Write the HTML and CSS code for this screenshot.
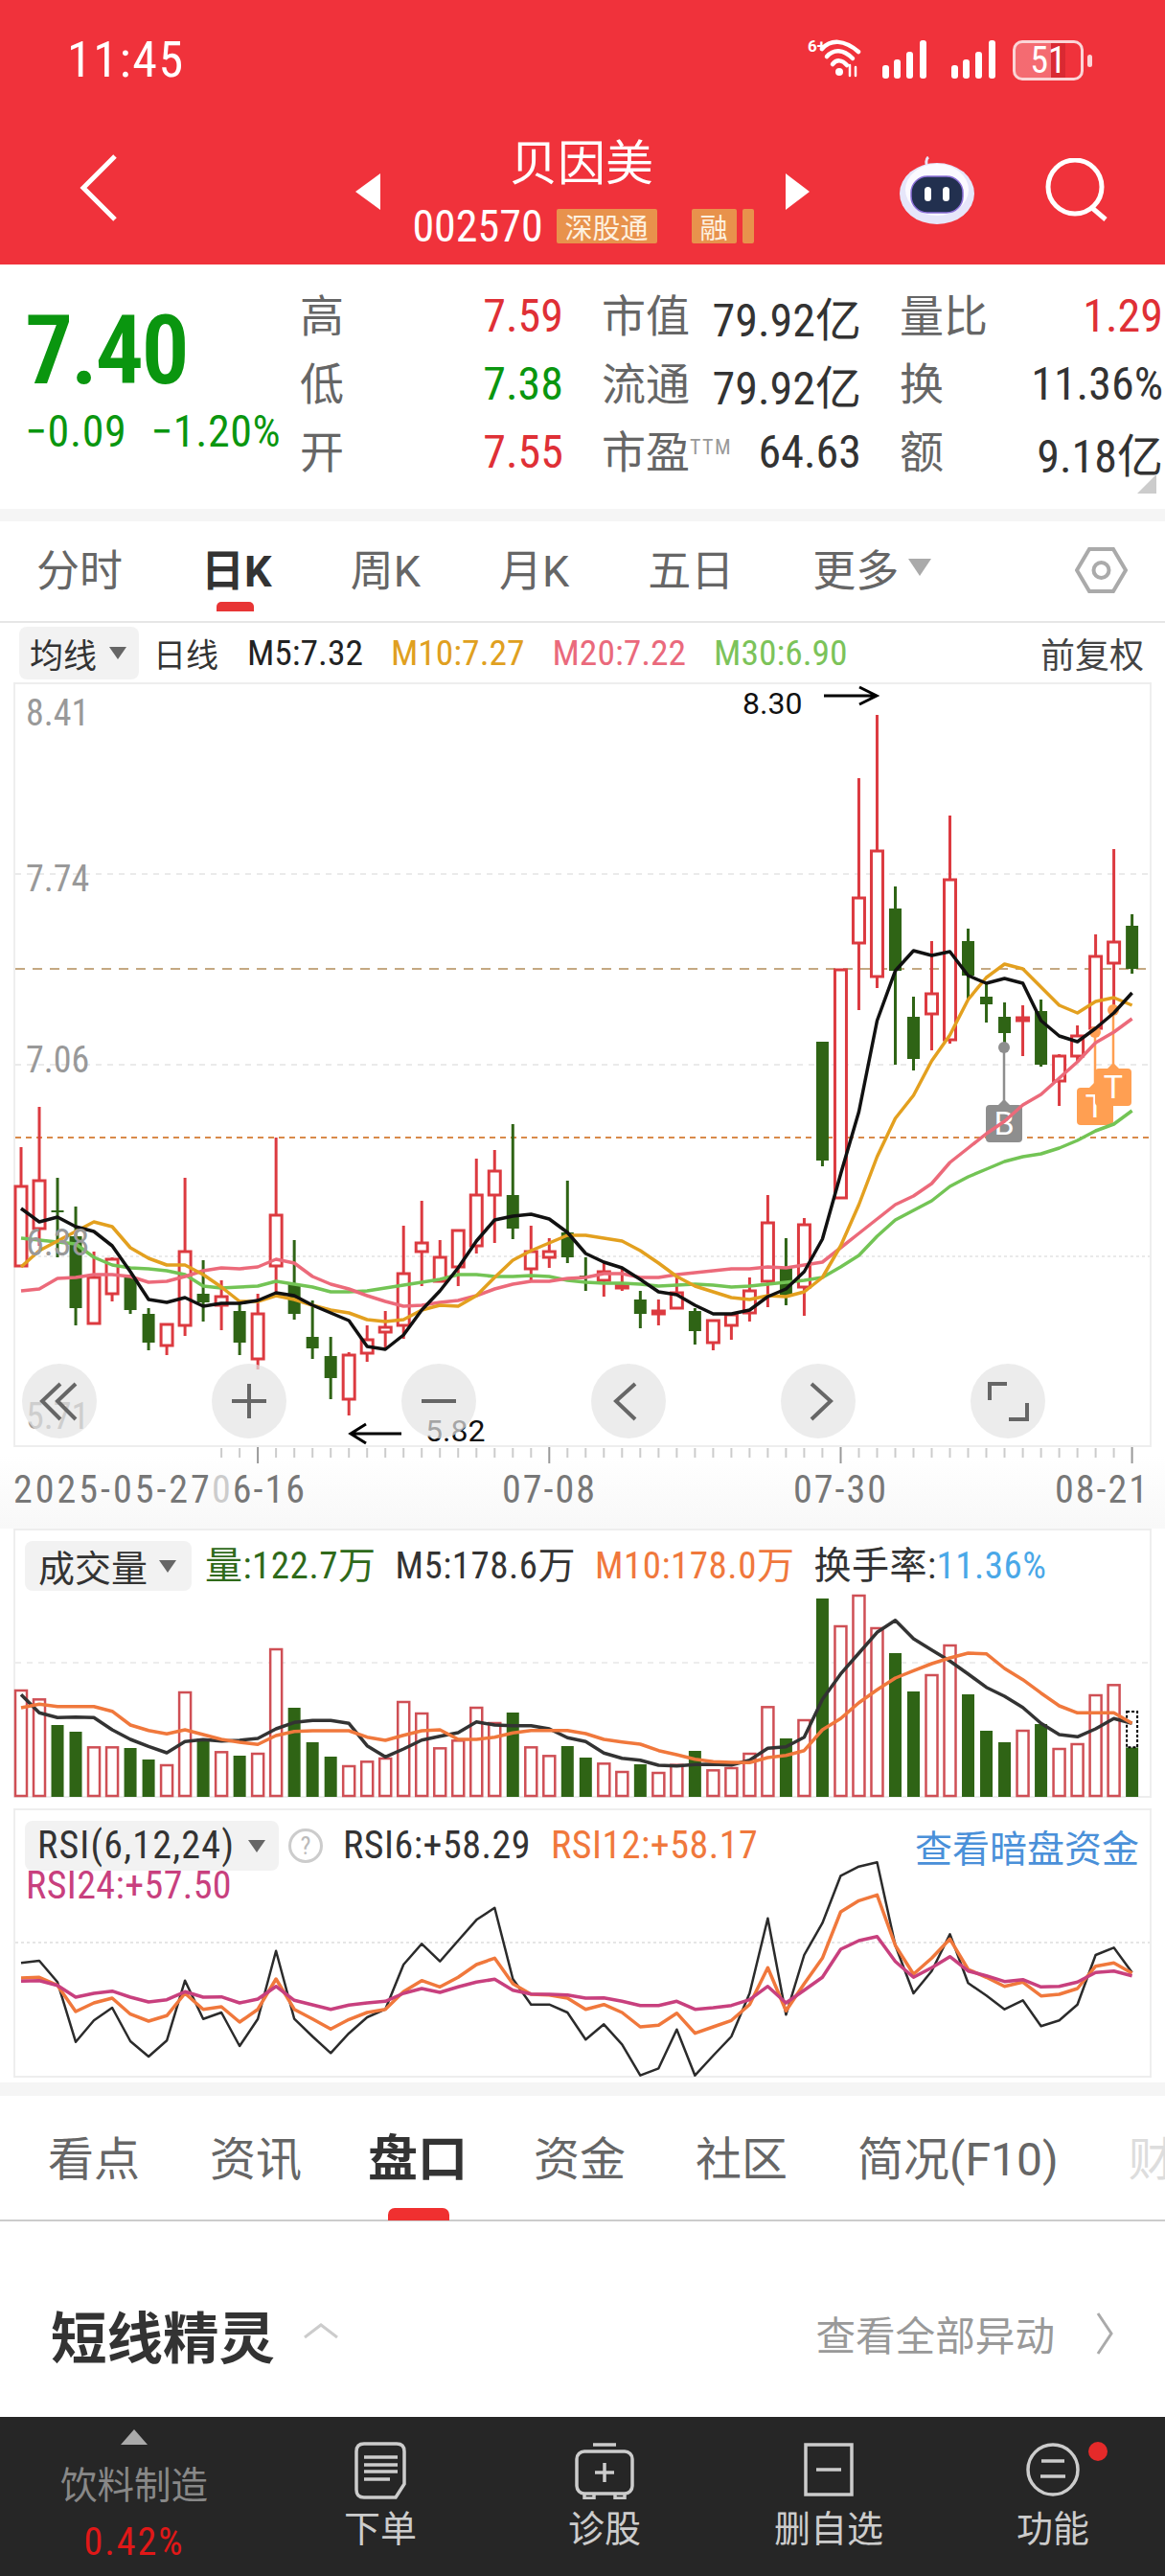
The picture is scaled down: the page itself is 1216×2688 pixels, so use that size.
FILE: index.html
```html
<!DOCTYPE html>
<html lang="zh-CN">
<head>
    <meta charset="UTF-8">
    <title>贝因美 002570</title>
    <link rel="stylesheet" href="styles.css">
</head>
<body>
<div class="app">
    <header class="top">
        <div class="status">
            <span class="clock">11:45</span>
            <div class="status-icons">
                <svg class="wifi" width="56" height="42" viewBox="0 0 56 42" fill="none" stroke="#fff" stroke-width="4.5" stroke-linecap="round">
                    <path d="M15 11 C24 1 38 1 53 14"/>
                    <path d="M20 19 C27 11 37 11 47 21"/>
                    <path d="M26 27 C30 22 36 22 41 28"/>
                    <circle cx="33" cy="35" r="4" fill="#fff" stroke="none"/>
                    <path d="M44 28 V39 M50 39 V30" stroke-width="2.5"/>
                    <text x="0" y="14" class="wifi-tag">6+</text>
                </svg>
                <svg width="48" height="40" viewBox="0 0 48 40" fill="#fff"><rect x="1" y="26" width="7" height="14" rx="3"/><rect x="13" y="20" width="7" height="20" rx="3"/><rect x="26" y="12" width="7" height="28" rx="3"/><rect x="40" y="0" width="7" height="40" rx="3"/></svg>
                <svg width="48" height="40" viewBox="0 0 48 40" fill="#fff"><rect x="1" y="26" width="7" height="14" rx="3"/><rect x="13" y="20" width="7" height="20" rx="3"/><rect x="26" y="12" width="7" height="28" rx="3"/><rect x="40" y="0" width="7" height="40" rx="3"/></svg>
                <div class="battery"><span>51</span></div>
            </div>
        </div>
        <div class="nav">
            <svg class="back" width="42" height="70" viewBox="0 0 42 70" fill="none" stroke="#fff" stroke-width="5"><path d="M38 2 L5 35 L38 68"/></svg>
            <span class="tri tri-left"></span>
            <div class="stock">
                <div class="stock-name">贝因美</div>
                <div class="stock-sub">
                    <span class="stock-code">002570</span>
                    <span class="badge badge-wide">深股通</span>
                    <span class="badge">融</span>
                    <span class="badge badge-cut"></span>
                </div>
            </div>
            <span class="tri tri-right"></span>
            <svg class="robot" width="80" height="72" viewBox="0 0 80 72">
                <path d="M30 12 C28 6 28 3 31 1" fill="none" stroke="#e9e4f8" stroke-width="3"/>
                <ellipse cx="40" cy="39" rx="39" ry="32" fill="#e6e6fa"/>
                <ellipse cx="40" cy="35" rx="33" ry="27" fill="#fbfaff"/>
                <rect x="13" y="21" width="54" height="38" rx="17" fill="#22304f" stroke="#8b6fd8" stroke-width="1.5"/>
                <rect x="27" y="32" width="7" height="15" rx="3.5" fill="#fff"/>
                <rect x="46" y="32" width="7" height="15" rx="3.5" fill="#fff"/>
            </svg>
            <svg class="search" width="66" height="66" viewBox="0 0 66 66" fill="none" stroke="#fff" stroke-width="5"><circle cx="31" cy="30" r="28"/><path d="M49 52 L63 64"/></svg>
        </div>
    </header>

    <section class="quote">
        <div class="price">
            <div class="price-now">7.40</div>
            <div class="price-change"><span>−0.09</span><span>−1.20%</span></div>
        </div>
        <div class="stats">
            <div class="stat"><span class="stat-label">高</span><span class="num up">7.59</span></div>
            <div class="stat"><span class="stat-label">市值</span><span class="num">79.92亿</span></div>
            <div class="stat"><span class="stat-label">量比</span><span class="num up">1.29</span></div>
            <div class="stat"><span class="stat-label">低</span><span class="num down">7.38</span></div>
            <div class="stat"><span class="stat-label">流通</span><span class="num">79.92亿</span></div>
            <div class="stat"><span class="stat-label">换</span><span class="num">11.36%</span></div>
            <div class="stat"><span class="stat-label">开</span><span class="num up">7.55</span></div>
            <div class="stat"><span class="stat-label">市盈<sup class="ttm">TTM</sup></span><span class="num">64.63</span></div>
            <div class="stat"><span class="stat-label">额</span><span class="num">9.18亿</span></div>
        </div>
        <span class="corner"></span>
    </section>
    <div class="band"></div>

    <nav class="kline-tabs">
        <a>分时</a>
        <a class="active">日K</a>
        <a>周K</a>
        <a>月K</a>
        <a>五日</a>
        <a class="more">更多<i class="caret"></i></a>
        <svg class="hex" width="55" height="50" viewBox="0 0 55 50" fill="none" stroke="#aaa" stroke-width="4"><path d="M2 25 L15 3 H40 L53 25 L40 47 H15 Z"/><circle cx="27.5" cy="25" r="8"/></svg>
    </nav>

    <div class="toolbar">
        <div class="pill pill-ma">均线<i class="caret caret-sm"></i></div>
        <span class="tb-line">日线</span>
        <span class="ma ma5">M5:7.32</span>
        <span class="ma ma10">M10:7.27</span>
        <span class="ma ma20">M20:7.22</span>
        <span class="ma ma30">M30:6.90</span>
        <span class="tb-right">前复权</span>
    </div>

    <div class="chart-box">
        <svg id="kline" class="plot" viewBox="14 712 1188 798" width="1188" height="798"></svg>
        <span class="axis-price" style="top:11px">8.41</span>
        <span class="axis-price" style="top:184px">7.74</span>
        <span class="axis-price" style="top:373px">7.06</span>
        <span class="axis-price" style="top:564px">6.38</span>
        <span class="axis-price" style="top:745px">5.71</span>
        <span class="extreme" style="left:759px;top:4px">8.30</span>
        <span class="extreme" style="left:428px;top:763px">5.82</span>
        <div class="chart-nav">
            <button><svg width="78" height="78" viewBox="0 0 78 78"><path d="M40 21L21 39L40 58M56 21L37 39L56 58"/></svg></button>
            <button><svg width="78" height="78" viewBox="0 0 78 78"><path d="M21 39H57M39 21V57"/></svg></button>
            <button><svg width="78" height="78" viewBox="0 0 78 78"><path d="M21 39H57"/></svg></button>
            <button><svg width="78" height="78" viewBox="0 0 78 78"><path d="M46 21L26 39L46 58"/></svg></button>
            <button><svg width="78" height="78" viewBox="0 0 78 78"><path d="M32 21L52 39L32 58"/></svg></button>
            <button><svg width="78" height="78" viewBox="0 0 78 78"><path d="M38 21H20V38M40 58H59V41"/></svg></button>
        </div>
    </div>

    <div class="axis">
        <svg id="ticks" class="ticks" viewBox="0 1510 1216 18" width="1216" height="18"></svg>
        <div class="dates">
            <span class="date-full">2025-05-27</span>
            <span><span class="fade">0</span>6-16</span>
            <span>07-08</span>
            <span>07-30</span>
            <span>08-21</span>
        </div>
    </div>

    <div class="sub-box vol-box">
        <svg id="volume" class="plot" viewBox="14 1595 1188 281" width="1188" height="281"></svg>
        <div class="sub-head">
            <div class="pill">成交量<i class="caret caret-sm"></i></div>
            <span class="v-green">量:122.7万</span>
            <span class="v-dark">M5:178.6万</span>
            <span class="v-orange">M10:178.0万</span>
            <span class="v-dark">换手率:<span class="v-blue">11.36%</span></span>
        </div>
    </div>

    <div class="sub-box rsi-box">
        <svg id="rsi" class="plot" viewBox="14 1887 1188 281" width="1188" height="281"></svg>
        <div class="sub-head rsi-head">
            <div class="pill pill-rsi">RSI(6,12,24)<i class="caret caret-sm"></i></div>
            <span class="help">?</span>
            <span class="v-dark">RSI6:+58.29</span>
            <span class="v-orange">RSI12:+58.17</span>
            <a class="dark-link">查看暗盘资金</a>
        </div>
        <div class="v-magenta rsi-line2">RSI24:+57.50</div>
    </div>

    <div class="band band-low"></div>

    <nav class="info-tabs">
        <a>看点</a>
        <a>资讯</a>
        <a class="active">盘口</a>
        <a>资金</a>
        <a>社区</a>
        <a>简况(F10)</a>
        <a class="faded">财务</a>
    </nav>

    <section class="sprite">
        <h2>短线精灵</h2>
        <svg class="fold" width="38" height="16" viewBox="0 0 38 16" fill="none" stroke="#ccc" stroke-width="3"><path d="M2 15 L19 2 L36 15"/></svg>
        <a class="sprite-all">查看全部异动</a>
        <svg class="go" width="18" height="44" viewBox="0 0 18 44" fill="none" stroke="#aaa" stroke-width="3"><path d="M2 1 L16 22 L2 43"/></svg>
    </section>

    <footer class="bottom">
        <div class="sector">
            <span class="sector-up"></span>
            <span class="sector-name">饮料制造</span>
            <span class="sector-pct">0.42%</span>
        </div>
        <a class="action">
            <svg width="54" height="60" viewBox="0 0 54 60" fill="none" stroke="#ccc" stroke-width="3.5">
                <path d="M10 2 H44 Q52 2 52 10 V44 L43 58 H10 Q2 58 2 50 V10 Q2 2 10 2 Z"/>
                <path d="M10 16 H45 M10 24 H45 M10 31 H45 M10 39 H37"/>
            </svg>
            <span>下单</span>
        </a>
        <a class="action">
            <svg width="62" height="60" viewBox="0 0 62 60" fill="none" stroke="#ccc" stroke-width="3.5">
                <path d="M19 3 H43"/>
                <rect x="2" y="10" width="58" height="44" rx="8"/>
                <path d="M31 22 V42 M21 32 H41"/>
                <path d="M10 55 V59 H20 V55 M42 55 V59 H52 V55"/>
            </svg>
            <span>诊股</span>
        </a>
        <a class="action">
            <svg width="52" height="60" viewBox="0 0 52 60" fill="none" stroke="#ccc" stroke-width="3.5">
                <rect x="2" y="3" width="48" height="52"/>
                <path d="M13 29 H39"/>
            </svg>
            <span>删自选</span>
        </a>
        <a class="action action-dot">
            <svg width="56" height="60" viewBox="0 0 56 60" fill="none" stroke="#ccc" stroke-width="3.5">
                <circle cx="28" cy="29" r="26"/>
                <path d="M16 20 H40 M15 36 H41"/>
            </svg>
            <span>功能</span>
        </a>
    </footer>
</div>
<script src="chart.js"></script>
</body>
</html>
```

FILE: styles.css
```css
* {
    box-sizing: border-box;
}

body {
    margin: 0;
    background: #fff;
    font-family: "Noto Sans CJK SC", Roboto, sans-serif;
    color: #333;
}

a {
    text-decoration: none;
    color: inherit;
}

.app {
    width: 1216px;
    height: 2688px;
    overflow: hidden;
    display: flex;
    flex-direction: column;
}

/* red header */
.top {
    height: 276px;
    background: #f0323b;
    color: #fff;
    flex: none;
}

.status {
    height: 130px;
    padding: 36px 85px 0 70px;
    display: flex;
    justify-content: space-between;
    align-items: flex-start;
}

.clock {
    font-family: Roboto, sans-serif;
    font-stretch: 75%;
    font-size: 52px;
    line-height: 54px;
    letter-spacing: 1.6px;
}

.status-icons {
    display: flex;
    align-items: flex-end;
    gap: 24px;
    padding-top: 4px;
}

.wifi {
    margin-right: -3px;
}

.wifi-tag {
    font-family: Roboto, sans-serif;
    font-size: 17px;
    font-weight: 700;
    fill: #fff;
    stroke: none;
}

.battery {
    position: relative;
    width: 74px;
    height: 42px;
    border: 3px solid #fbd5d7;
    border-radius: 10px;
    background: linear-gradient(to right, rgba(255, 255, 255, 0.28) 54%, rgba(190, 30, 40, 0.45) 54%, rgba(190, 30, 40, 0.45) 76%, transparent 76%);
    font-family: Roboto, sans-serif;
    font-stretch: 75%;
    font-size: 38px;
    line-height: 36px;
    text-align: center;
    margin-left: -7px;
    margin-bottom: -2px;
}

.battery::after {
    content: "";
    position: absolute;
    right: -12px;
    top: 12px;
    width: 5px;
    height: 13px;
    border-radius: 3px;
    background: #fbd5d7;
}

.nav {
    display: flex;
    align-items: flex-start;
    height: 146px;
}

.back {
    margin: 31px 0 0 82px;
}

.tri {
    width: 0;
    height: 0;
    margin-top: 51px;
    border-top: 19px solid transparent;
    border-bottom: 19px solid transparent;
}

.tri-left {
    margin-left: 247px;
    border-right: 26px solid #fff;
}

.tri-right {
    border-left: 25px solid #fff;
}

.stock {
    width: 423px;
    display: flex;
    flex-direction: column;
    align-items: center;
}

.stock-name {
    font-size: 50px;
    line-height: 62px;
    margin: 5px 3px 0 0;
}

.stock-sub {
    display: flex;
    align-items: center;
    margin-top: 21px;
    height: 36px;
}

.stock-code {
    font-family: Roboto, sans-serif;
    font-stretch: 75%;
    font-size: 46px;
    margin-right: 14px;
}

.badge {
    height: 36px;
    width: 47px;
    background: #e8924c;
    border-radius: 2px;
    color: #fdf1e0;
    font-size: 29px;
    line-height: 36px;
    text-align: center;
    margin-right: 6px;
}

.badge-wide {
    width: 105px;
    margin-right: 36px;
}

.badge-cut {
    width: 12px;
    margin-right: 0;
}

.robot {
    margin: 33px 0 0 93px;
}

.search {
    margin: 35px 0 0 73px;
}

/* quote block */
.quote {
    position: relative;
    flex: none;
    height: 255px;
    padding: 18px 0 0 26px;
    display: flex;
}

.price {
    width: 290px;
}

.price-now {
    font-family: Roboto, sans-serif;
    font-stretch: 75%;
    font-size: 100px;
    font-weight: 600;
    line-height: 100px;
    color: #0a960f;
    margin-top: 22px;
    letter-spacing: -2.5px;
}

.price-change {
    display: flex;
    gap: 25px;
    font-family: Roboto, sans-serif;
    font-stretch: 75%;
    font-size: 46px;
    line-height: 50px;
    letter-spacing: 0.6px;
    color: #0a960f;
    margin-top: 9px;
    white-space: nowrap;
}

.stats {
    display: grid;
    grid-template-columns: 272px 268px 272px;
    grid-auto-rows: 71px;
    column-gap: 43px;
}

.stat {
    display: flex;
    justify-content: space-between;
    align-items: center;
}

.stat-label {
    font-size: 46px;
    line-height: 60px;
    margin-left: -3px;
    padding-bottom: 7px;
    color: #666;
    white-space: nowrap;
}

.ttm {
    font-family: Roboto, sans-serif;
    font-stretch: 75%;
    font-size: 22px;
    line-height: 1;
    letter-spacing: 1.5px;
    color: #999;
    vertical-align: 14px;
}

.num {
    font-family: Roboto, "Noto Sans CJK SC", sans-serif;
    font-stretch: 75%;
    font-size: 48px;
    color: #333;
    white-space: nowrap;
}

.up {
    color: #df3036;
}

.down {
    color: #0a960f;
}

.corner {
    position: absolute;
    right: 9px;
    bottom: 16px;
    width: 0;
    height: 0;
    border-left: 20px solid transparent;
    border-bottom: 20px solid #ccc;
}

.band {
    height: 13px;
    background: #f5f5f5;
    flex: none;
}

/* k-line tabs */
.kline-tabs {
    position: relative;
    flex: none;
    height: 106px;
    padding: 0 0 8px 38px;
    display: flex;
    align-items: center;
    gap: 82px;
    border-bottom: 2px solid #e6e6e6;
    font-family: Roboto, "Noto Sans CJK SC", sans-serif;
    font-size: 45px;
    color: #666;
}

.kline-tabs .active {
    position: relative;
    color: #333;
    font-weight: 700;
}

.kline-tabs .active::after {
    content: "";
    position: absolute;
    left: 16px;
    top: 68px;
    width: 39px;
    height: 10px;
    background: #e83535;
    border-radius: 5px 5px 0 0;
}

.more {
    display: flex;
    align-items: center;
    gap: 10px;
}

.caret {
    width: 0;
    height: 0;
    border-left: 12px solid transparent;
    border-right: 12px solid transparent;
    border-top: 18px solid #aaa;
}

.caret-sm {
    border-left-width: 9px;
    border-right-width: 9px;
    border-top: 13px solid #666;
}

.hex {
    position: absolute;
    left: 1122px;
    top: 26px;
}

/* chart toolbar */
.toolbar {
    flex: none;
    height: 62px;
    padding: 0 22px 0 20px;
    display: flex;
    align-items: center;
    font-size: 36px;
}

.pill {
    display: flex;
    align-items: center;
    background: #f2f2f2;
    border-radius: 8px;
    white-space: nowrap;
}

.pill-ma {
    width: 125px;
    height: 55px;
    padding-left: 11px;
    gap: 13px;
    font-size: 35px;
}

.tb-line {
    margin-left: 15px;
    margin-right: 30px;
    font-size: 34px;
}

.ma {
    font-family: Roboto, sans-serif;
    font-stretch: 75%;
    font-size: 37.5px;
    margin-right: 29px;
    color: #222;
}

.ma10 {
    color: #e0a020;
}

.ma20 {
    color: #ea6a7c;
}

.ma30 {
    color: #7cc35a;
}

.tb-right {
    margin-left: auto;
    color: #444;
}

/* main chart */
.chart-box {
    position: relative;
    flex: none;
    height: 798px;
    margin: 0 14px;
    border: 2px solid #eee;
}

.plot {
    position: absolute;
    left: -2px;
    top: -2px;
    display: block;
}

.axis-price {
    position: absolute;
    left: 11px;
    font-family: Roboto, sans-serif;
    font-stretch: 75%;
    font-size: 38px;
    line-height: 38px;
    color: #999;
}

.extreme {
    position: absolute;
    font-family: Roboto, sans-serif;
    font-size: 32px;
    line-height: 32px;
    color: #111;
}

.chart-nav {
    position: absolute;
    left: 7px;
    top: 709px;
    display: flex;
    gap: 120px;
}

.chart-nav button {
    width: 78px;
    height: 78px;
    padding: 0;
    border: none;
    border-radius: 50%;
    background: rgba(228, 228, 228, 0.7);
}

.chart-nav svg {
    display: block;
    fill: none;
    stroke: #666;
    stroke-width: 4;
}

/* date axis */
.axis {
    flex: none;
    height: 85px;
    background: linear-gradient(#fff 10%, #f8f8f8);
}

.ticks {
    display: block;
}

.dates {
    display: grid;
    grid-template-columns: 207px 303px 304px 273px 1fr;
    padding: 5px 0 0 14px;
    font-family: Roboto, sans-serif;
    font-stretch: 75%;
    font-size: 40px;
    line-height: 44px;
    letter-spacing: 2px;
    color: #777;
    white-space: nowrap;
}

.date-full {
    letter-spacing: 3px;
}

.fade {
    color: #ccc;
}

/* volume and rsi boxes */
.sub-box {
    position: relative;
    flex: none;
    height: 281px;
    margin: 0 14px;
    border: 2px solid #eee;
    font-family: Roboto, "Noto Sans CJK SC", sans-serif;
    font-stretch: 75%;
    font-size: 39px;
    background: #fff;
}

.rsi-box {
    margin-top: 11px;
    font-size: 40px;
}

.sub-head {
    position: relative;
    display: flex;
    align-items: center;
    gap: 20px;
    padding: 11px 0 0 10px;
    line-height: 52px;
    letter-spacing: 0.5px;
    white-space: nowrap;
}

.sub-head .pill {
    font-family: "Noto Sans CJK SC", sans-serif;
    font-size: 38px;
    letter-spacing: 0;
    height: 52px;
    padding: 0 16px 0 14px;
    gap: 12px;
    margin-right: -6px;
}

.sub-head .pill-rsi {
    font-family: Roboto, sans-serif;
    font-stretch: 75%;
    font-size: 40px;
    letter-spacing: 1.2px;
    width: 265px;
    margin-right: 0;
    padding: 0 0 0 13px;
    gap: 14px;
}

.rsi-head {
    gap: 0;
}

.help {
    width: 36px;
    height: 36px;
    margin: 0 21px 0 10px;
    border: 3px solid #ccc;
    border-radius: 50%;
    color: #bbb;
    font-size: 26px;
    line-height: 30px;
    text-align: center;
    letter-spacing: 0;
}

.rsi-head .v-dark {
    margin-right: 21px;
}

.rsi-line2 {
    position: relative;
    margin: -2px 0 0 11px;
    line-height: 36px;
    letter-spacing: 0.4px;
}

.dark-link {
    margin-left: auto;
    margin-right: 11px;
    font-family: "Noto Sans CJK SC", sans-serif;
    font-size: 39px;
    letter-spacing: 0;
    color: #4a90d9;
}

.v-green {
    color: #2f6a1a;
}

.v-dark {
    color: #333;
}

.v-orange {
    color: #f0783c;
}

.v-blue {
    color: #4aa8e8;
}

.v-magenta {
    color: #c8407e;
}

.band-low {
    margin-top: 5px;
    height: 14px;
}

/* lower tabs */
.info-tabs {
    flex: none;
    height: 131px;
    padding: 4px 0 0 50px;
    display: flex;
    align-items: center;
    gap: 73px;
    border-bottom: 2px solid #ccc;
    font-family: Roboto, "Noto Sans CJK SC", sans-serif;
    font-size: 48px;
    line-height: 60px;
    color: #666;
    white-space: nowrap;
}

.info-tabs .active {
    position: relative;
    margin: 0 -4px;
    font-size: 52px;
    font-weight: 700;
    color: #333;
}

.info-tabs .active::after {
    content: "";
    position: absolute;
    left: 21px;
    bottom: -33px;
    width: 64px;
    height: 13px;
    background: #f03030;
    border-radius: 7px 7px 0 0;
}

.faded {
    color: #ddd;
}

/* short line section */
.sprite {
    flex: none;
    height: 204px;
    padding: 30px 54px 0 53px;
    display: flex;
    align-items: center;
}

.sprite h2 {
    margin: 0;
    font-size: 58.5px;
    font-weight: 700;
    color: #333;
}

.fold {
    margin: 0 0 6px 29px;
}

.sprite-all {
    margin-left: auto;
    margin-right: 43px;
    font-size: 41.6px;
    color: #999;
}

.bottom {
    flex: none;
    height: 166px;
    background: #262626;
    display: grid;
    grid-template-columns: 280px repeat(4, 234px);
}

.sector {
    display: flex;
    flex-direction: column;
    align-items: center;
    padding-top: 13px;
}

.sector-up {
    width: 0;
    height: 0;
    border-left: 14px solid transparent;
    border-right: 14px solid transparent;
    border-bottom: 16px solid #aaa;
}

.sector-name {
    margin-top: 16px;
    font-size: 38.5px;
    line-height: 46px;
    color: #888;
}

.sector-pct {
    margin-top: 18px;
    font-family: Roboto, sans-serif;
    font-stretch: 75%;
    font-size: 40px;
    line-height: 44px;
    letter-spacing: 2px;
    color: #e01818;
}

.action {
    position: relative;
    display: flex;
    flex-direction: column;
    align-items: center;
    padding-top: 26px;
    color: #ccc;
    font-size: 38px;
    line-height: 40px;
}

.action span {
    margin-top: 8px;
}

.action-dot::after {
    content: "";
    position: absolute;
    left: 154px;
    top: 26px;
    width: 20px;
    height: 20px;
    border-radius: 50%;
    background: #e52a2a;
}
```

FILE: chart.js
```js
const RED = '#dc3a40';
const GREEN = '#2f6415';

// color, high, body top, body bottom, low (page y)
const candles = [
    ['r',1197,1238,1321,1321],['r',1155,1232,1282,1300],['g',1229,1263,1265,1312],['g',1259,1290,1365,1383],
    ['r',1306,1333,1381,1381],['r',1312,1314,1350,1358],['g',1330,1333,1367,1371],['g',1365,1371,1401,1409],
    ['r',1382,1382,1404,1414],['r',1229,1306,1383,1394],['g',1315,1350,1359,1379],['r',1336,1353,1362,1388],
    ['g',1360,1368,1401,1414],['r',1350,1371,1418,1429],['r',1187,1268,1321,1350],['g',1294,1340,1371,1377],
    ['g',1357,1395,1407,1418],['g',1395,1415,1438,1460],['r',1411,1414,1460,1477],['r',1383,1398,1412,1421],
    ['r',1368,1385,1390,1407],['r',1279,1329,1383,1397],['r',1253,1297,1306,1342],['r',1294,1312,1337,1338],
    ['r',1283,1284,1322,1342],['r',1209,1247,1300,1308],['r',1200,1222,1247,1297],['g',1173,1247,1282,1293],
    ['r',1279,1306,1324,1336],['r',1292,1306,1312,1323],['g',1232,1286,1312,1318],['g',1312,1331,1333,1347],
    ['r',1318,1327,1336,1353],['r',1323,1341,1344,1347],['g',1347,1356,1371,1386],['r',1356,1368,1371,1383],
    ['r',1330,1349,1365,1365],['g',1365,1368,1389,1403],['r',1377,1378,1401,1409],['r',1372,1372,1383,1398],
    ['r',1333,1347,1370,1379],['r',1247,1276,1337,1364],['g',1292,1322,1352,1362],['r',1271,1278,1343,1373],
    ['g',1087,1087,1211,1217],['r',1012,1012,1250,1250],['r',812,937,984,1054],['r',746,888,1019,1031],
    ['g',925,948,1013,1111],['g',1040,1061,1105,1117],['r',982,1037,1058,1096],['r',851,918,1085,1089],
    ['g',969,982,1018,1043],['g',1025,1040,1048,1067],['g',1046,1061,1078,1092],['r',1049,1062,1065,1102],
    ['g',1043,1055,1111,1113],['r',1100,1102,1128,1154],['r',1070,1081,1102,1108],['r',975,998,1073,1073],
    ['r',886,983,1005,1053],['g',954,966,1011,1016]
];

const ma5 = [1261,1275,1270,1280,1285,1300,1327,1356,1359,1354,1363,1360,1360,1357,1349,1352,1362,1370,1378,1405,1408,
    1393,1367,1347,1323,1295,1273,1269,1267,1272,1286,1308,1317,1323,1335,1348,1351,1362,1371,1371,1367,1353,1345,1327,1293,1225,
    1160,1065,1013,992,997,993,1018,1026,1021,1026,1065,1081,1087,1073,1057,1036];
const ma10 = [1322,1305,1295,1285,1275,1280,1302,1313,1320,1320,1330,1343,1358,1358,1352,1356,1362,1367,1370,1377,1379,
    1377,1367,1362,1363,1352,1333,1315,1305,1297,1289,1289,1292,1295,1305,1318,1332,1342,1348,1354,1356,1352,1353,1348,1333,1300,
    1257,1207,1167,1143,1107,1080,1043,1020,1006,1011,1030,1049,1057,1045,1041,1049];
const ma20 = [1347,1345,1334,1333,1330,1330,1332,1338,1337,1332,1326,1323,1324,1322,1314,1318,1332,1340,1345,1352,1358,
    1363,1362,1359,1357,1352,1345,1340,1337,1337,1334,1333,1329,1329,1333,1333,1330,1328,1326,1324,1324,1322,1323,1320,1317,1302,
    1287,1272,1257,1248,1235,1213,1198,1183,1170,1153,1142,1125,1108,1088,1077,1063];
const ma30 = [1292,1294,1296,1298,1312,1320,1323,1324,1326,1330,1342,1344,1343,1342,1337,1340,1343,1348,1348,1347,1344,
    1341,1338,1335,1330,1330,1332,1332,1331,1332,1336,1338,1339,1339,1340,1342,1341,1340,1341,1343,1342,1340,1338,1336,1333,1322,
    1310,1290,1273,1263,1253,1238,1228,1220,1212,1207,1204,1198,1190,1180,1173,1159];

// volume bars: color, top in crop units (page y = 1580 + v / 3)
const volumes = [
    ['r',552],['r',580],['g',660],['g',681],['r',730],['r',730],['g',732],['g',768],['r',786],['r',558],['g',703],['r',745],
    ['g',756],['r',750],['r',423],['g',606],['g',714],['g',759],['r',789],['r',775],['r',765],['r',588],['r',624],['r',733],
    ['r',709],['r',606],['r',654],['g',621],['r',730],['r',757],['g',726],['g',762],['r',781],['r',807],['g',783],['r',810],
    ['r',785],['g',741],['r',802],['r',795],['r',750],['r',604],['g',702],['r',645],['g',264],['r',351],['r',255],['r',357],
    ['g',435],['g',555],['r',504],['r',411],['g',564],['g',678],['g',714],['r',678],['g',657],['r',735],['r',720],['r',567],
    ['r',535],['g',730]
];
const volM5 = [565,622,637,635,637,675,705,727,747,712,706,710,708,702,672,652,646,646,655,725,760,735,707,695,684,650,660,662,662,672,700,
    712,748,764,770,786,788,784,783,785,770,733,728,698,580,500,435,370,332,390,425,460,500,542,570,605,655,690,697,672,640,655];
const volM10 = [606,595,602,602,602,617,660,677,688,675,690,705,714,721,693,680,678,678,678,698,708,692,678,675,705,705,698,685,677,677,677,
    687,705,713,720,740,753,767,775,777,778,762,755,740,675,640,590,550,513,490,468,450,435,437,483,518,560,600,622,622,622,655];

// rsi values, crop units (page y = 1880 + v / 3)
const rsi6 = [505,498,565,752,685,645,750,798,748,560,680,660,765,680,467,680,735,787,725,675,650,510,445,500,435,370,332,555,635,635,660,
    745,697,760,857,835,713,857,795,735,600,365,667,480,380,232,203,190,450,600,530,415,568,607,650,622,703,685,635,480,457,535];
const rsi12 = [552,550,575,657,630,615,665,687,670,600,650,642,690,650,555,650,680,712,682,660,650,595,560,580,550,510,490,570,603,605,615,
    650,635,660,705,700,662,725,705,685,635,520,655,570,490,345,310,292,450,540,490,430,525,550,578,565,608,603,585,515,505,537];
const rsi24 = [562,560,575,612,600,593,612,627,620,595,612,611,630,618,578,622,636,650,637,630,625,600,585,597,580,565,556,590,602,603,605,
    615,614,625,638,638,625,650,645,638,620,578,630,590,550,462,435,422,500,550,520,485,530,545,563,557,580,578,565,535,530,545];

function cx(i) {
    return 22 + 19.01 * i;
}

function polyline(ys, color, width) {
    const pts = ys.map((y, i) => `${cx(i).toFixed(1)},${y.toFixed(1)}`).join(' ');
    return `<polyline points="${pts}" fill="none" stroke="${color}" stroke-width="${width}" stroke-linejoin="round"/>`;
}

function hline(y, color, width, dash) {
    return `<line x1="16" x2="1200" y1="${y}" y2="${y}" stroke="${color}" stroke-width="${width}" stroke-dasharray="${dash}"/>`;
}

function drawCandle(c, i) {
    const x = cx(i);
    const color = c[0] === 'r' ? RED : GREEN;
    let out = `<line x1="${x}" x2="${x}" y1="${c[1]}" y2="${c[4]}" stroke="${color}" stroke-width="3"/>`;
    if (c[0] === 'r') {
        out += `<rect x="${x - 6}" y="${c[2]}" width="12" height="${c[3] - c[2]}" fill="#fff" stroke="${color}" stroke-width="3"/>`;
    } else {
        out += `<rect x="${x - 6.5}" y="${c[2]}" width="13" height="${Math.max(c[3] - c[2], 2)}" fill="${color}"/>`;
    }
    return out;
}

function drawPin(x, dotY, boxX, boxY, color, label) {
    return `<line x1="${x}" x2="${x}" y1="${dotY}" y2="${boxY}" stroke="${color}" stroke-width="2.5"/>` +
        `<circle cx="${x}" cy="${dotY}" r="6" fill="${color}"/>` +
        `<path d="M${x - 7} ${boxY + 1} L${x} ${boxY - 6} L${x + 7} ${boxY + 1} Z" fill="${color}"/>` +
        `<rect x="${boxX}" y="${boxY}" width="38" height="39" rx="4" fill="${color}"/>` +
        `<text x="${boxX + 19}" y="${boxY + 31}" text-anchor="middle" fill="#fff" font-family="Roboto, sans-serif" font-size="34">${label}</text>`;
}

function drawKline() {
    let s = hline(912, '#e4e4e4', 1.5, '6 6') + hline(1111, '#e4e4e4', 1.5, '6 6') + hline(1311, '#e4e4e4', 1.5, '3 3');
    s += hline(1011, '#c4a882', 2, '10 8') + hline(1187, '#d98a4a', 2, '6 5');
    s += candles.map(drawCandle).join('');
    s += drawPin(1048, 1093, 1029, 1153, '#8e8e8e', 'B');
    s += drawPin(1143, 1077, 1124, 1135, '#ff9f52', 'T');
    s += drawPin(1162, 1054, 1143, 1115, '#ff9f52', 'T');
    s += polyline(ma30, '#73c455', 3.5) + polyline(ma20, '#ec6a7a', 3.5) + polyline(ma10, '#e3a01f', 3.5) + polyline(ma5, '#111', 3.5);
    s += '<path d="M860 726 H915 M897 717 L915 726 L897 735" fill="none" stroke="#000" stroke-width="3"/>';
    s += '<path d="M419 1496 H366 M382 1486 L366 1496 L382 1506" fill="none" stroke="#000" stroke-width="3"/>';
    document.getElementById('kline').innerHTML = s;
}

function drawTicks() {
    let s = '';
    candles.forEach((c, i) => {
        if (i < 11) return;
        const x = cx(i).toFixed(1);
        s += (i % 16 === 13)
            ? `<line x1="${x}" x2="${x}" y1="1510" y2="1527" stroke="#999" stroke-width="2"/>`
            : `<line x1="${x}" x2="${x}" y1="1511" y2="1521" stroke="#ccc" stroke-width="2"/>`;
    });
    document.getElementById('ticks').innerHTML = s;
}

function drawVolume() {
    const toY = v => 1580 + v / 3;
    let s = hline(1735, '#e8e8e8', 1.5, '6 6');
    volumes.forEach((b, i) => {
        const x = cx(i);
        const top = toY(b[1]);
        s += b[0] === 'r'
            ? `<rect x="${x - 6}" y="${top}" width="12" height="${1874 - top}" fill="#fff" stroke="#cf4f55" stroke-width="2.5"/>`
            : `<rect x="${x - 6.5}" y="${top}" width="13" height="${1875 - top}" fill="${GREEN}"/>`;
    });
    s += `<rect x="${cx(61) - 5.5}" y="${toY(618)}" width="11" height="${toY(730) - toY(618)}" fill="#fff" stroke="#000" stroke-width="2" stroke-dasharray="3 2"/>`;
    s += polyline(volM5.map(toY), '#333', 3.5) + polyline(volM10.map(toY), '#f0783c', 3.5);
    document.getElementById('volume').innerHTML = s;
}

function drawRsi() {
    const toY = v => 1880 + v / 3;
    let s = hline(2027, '#ddd', 1.5, '3 3');
    s += polyline(rsi6.map(toY), '#2b2b2b', 2.5) + polyline(rsi12.map(toY), '#f0783c', 3.5) + polyline(rsi24.map(toY), '#c8407e', 3.5);
    document.getElementById('rsi').innerHTML = s;
}

drawKline();
drawTicks();
drawVolume();
drawRsi();
```
